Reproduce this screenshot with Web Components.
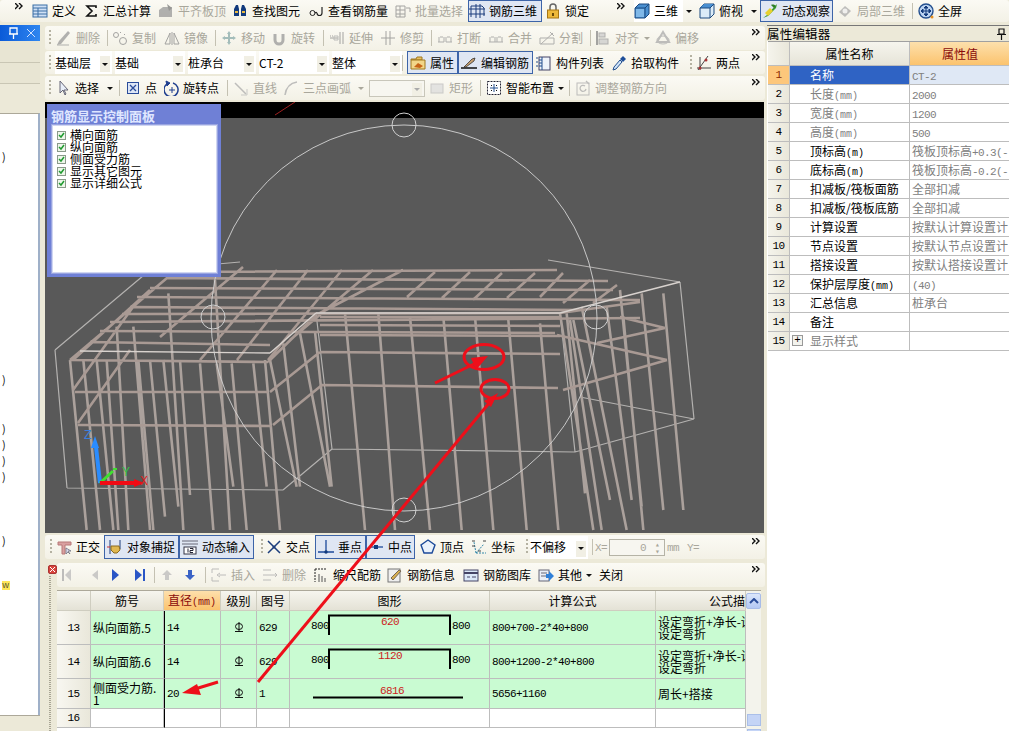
<!DOCTYPE html>
<html>
<head>
<meta charset="utf-8">
<style>
html,body{margin:0;height:100%;overflow:hidden;background:#ece9d8}
body{font:12px/14px "Noto Sans CJK SC",sans-serif;color:#000}
</style>
</head>
<body>
<app-shell>
  <tool-bar slot="top" h="22" pl="15">
    <tb-more w="17"></tb-more>
    <tool-btn w="51" icon="def">定义</tool-btn>
    <tool-btn w="75" icon="sum">汇总计算</tool-btn>
    <tool-btn w="74" icon="flush" dis>平齐板顶</tool-btn>
    <tool-btn w="76" icon="bino">查找图元</tool-btn>
    <tool-btn w="87" icon="glass">查看钢筋量</tool-btn>
    <tool-btn w="73" icon="batch" dis>批量选择</tool-btn>
    <tool-btn w="74" icon="grid3" pl="1" on>钢筋三维</tool-btn>
    <tool-btn w="72" icon="lock" ml="3">锁定</tool-btn>
    <tb-more w="17"></tb-more>
    <tool-btn w="65" icon="cube" drop="8" white>三维</tool-btn>
    <tool-btn w="61" icon="cubet" drop="8">俯视</tool-btn>
    <tool-btn w="73" icon="orbit" pl="2" on>动态观察</tool-btn>
    <tool-btn w="75" icon="local" ml="4" dis>局部三维</tool-btn>
    <tb-sep w="6"></tb-sep>
    <tool-btn w="60" icon="full">全屏</tool-btn>
  </tool-bar>

  <left-dock slot="left"></left-dock>

  <center-col slot="center">
    <tool-bar h="24" pl="4" mt="1">
      <tb-grip w="7"></tb-grip>
      <tool-btn w="51" icon="erase" dis>删除</tool-btn>
      <tb-sep w="5"></tb-sep>
      <tool-btn w="52" icon="copy" dis>复制</tool-btn>
      <tool-btn w="51" icon="mirror" dis>镜像</tool-btn>
      <tb-sep w="6"></tb-sep>
      <tool-btn w="50" icon="move" dis>移动</tool-btn>
      <tool-btn w="52" icon="rot" dis>旋转</tool-btn>
      <tb-sep w="6"></tb-sep>
      <tool-btn w="51" icon="extend" dis>延伸</tool-btn>
      <tool-btn w="51" icon="trim" dis>修剪</tool-btn>
      <tb-sep w="6"></tb-sep>
      <tool-btn w="51" icon="brk" dis>打断</tool-btn>
      <tool-btn w="51" icon="merge" dis>合并</tool-btn>
      <tool-btn w="51" icon="split" dis>分割</tool-btn>
      <tb-sep w="5"></tb-sep>
      <tool-btn w="60" icon="alignl" drop="5" dis>对齐</tool-btn>
      <tool-btn w="50" icon="offset" dis>偏移</tool-btn>
      <tb-more></tb-more>
    </tool-bar>
    <tool-bar h="23" pl="4" mt="1">
      <tb-grip w="6"></tb-grip>
      <tb-combo w="57">基础层</tb-combo>
      <tb-combo w="70" ml="3">基础</tb-combo>
      <tb-combo w="68" ml="3">桩承台</tb-combo>
      <tb-combo w="70" ml="3">CT-2</tb-combo>
      <tb-combo w="70" ml="3">整体</tb-combo>
      <tb-sep w="5"></tb-sep>
      <tool-btn w="51" icon="prop" pl="3" on>属性</tool-btn>
      <tool-btn w="75" icon="edit" pl="3" on>编辑钢筋</tool-btn>
      <tool-btn w="78" icon="list" pl="3">构件列表</tool-btn>
      <tool-btn w="72" icon="pick">拾取构件</tool-btn>
      <tb-grip w="13" ml="7"></tb-grip>
      <tool-btn w="50" icon="twop" ml="-7">两点</tool-btn>
      <tb-more></tb-more>
    </tool-bar>
    <tool-bar h="24" pl="4" mt="2">
      <tb-grip w="6"></tb-grip>
      <tool-btn w="64" icon="arrow" drop="8">选择</tool-btn>
      <tb-sep w="6"></tb-sep>
      <tool-btn w="39" icon="pt">点</tool-btn>
      <tool-btn w="63" icon="rotpt" gap="3">旋转点</tool-btn>
      <tb-sep w="6"></tb-sep>
      <tool-btn w="50" icon="line" dis>直线</tool-btn>
      <tool-btn w="86" icon="arc" drop="7" dis>三点画弧</tool-btn>
      <tb-combo w="56" off></tb-combo>
      <tool-btn w="51" icon="rect" ml="4" dis>矩形</tool-btn>
      <tb-sep w="6"></tb-sep>
      <tool-btn w="83" icon="smart" drop="4">智能布置</tool-btn>
      <tb-sep w="6"></tb-sep>
      <tool-btn w="100" icon="adj" dis>调整钢筋方向</tool-btn>
      <tb-more></tb-more>
    </tool-bar>

    <view-port>
      <ctrl-panel></ctrl-panel>
    </view-port>

    <tool-bar h="24" pl="5" mt="2">
      <tb-grip w="6"></tb-grip>
      <tool-btn w="48" icon="ortho">正交</tool-btn>
      <tool-btn w="75" icon="snap" pl="3" on>对象捕捉</tool-btn>
      <tool-btn w="75" icon="dyn" pl="3" on>动态输入</tool-btn>
      <tb-grip w="5" ml="7"></tb-grip>
      <tool-btn w="49" icon="cross">交点</tool-btn>
      <tool-btn w="51" icon="perp" pl="3" on>垂点</tool-btn>
      <tool-btn w="49" icon="mid" pl="2" on>中点</tool-btn>
      <tool-btn w="51" icon="vert" ml="5">顶点</tool-btn>
      <tool-btn w="55" icon="coord">坐标</tool-btn>
      <tb-grip w="4"></tb-grip>
      <tb-combo w="58">不偏移</tb-combo>
      <tb-sep w="3" ml="4"></tb-sep>
      <tb-spin></tb-spin>
      <tb-more></tb-more>
    </tool-bar>

    <rebar-panel>
      <tool-bar h="24" pl="2">
        <tool-btn w="28" icon="first" dis></tool-btn>
        <tool-btn w="20" icon="prev" dis></tool-btn>
        <tool-btn w="25" icon="next"></tool-btn>
        <tool-btn w="22" icon="last"></tool-btn>
        <tb-sep w="5"></tb-sep>
        <tool-btn w="23" icon="up" dis></tool-btn>
        <tool-btn w="23" icon="down"></tool-btn>
        <tb-sep w="6"></tb-sep>
        <tool-btn w="51" icon="ins" dis>插入</tool-btn>
        <tool-btn w="51" icon="del" dis>删除</tool-btn>
        <tool-btn w="74" icon="scale">缩尺配筋</tool-btn>
        <tool-btn w="76" icon="info">钢筋信息</tool-btn>
        <tool-btn w="75" icon="lib">钢筋图库</tool-btn>
        <tool-btn w="61" icon="other" drop="4">其他</tool-btn>
        <span>关闭</span>
        <tb-more></tb-more>
      </tool-bar>
      <rebar-grid></rebar-grid>
    </rebar-panel>
  </center-col>

  <prop-dock slot="right"></prop-dock>
</app-shell>
<red-notes></red-notes>

<script>
const S = 'fill="none" stroke="';
// icons are all drawn in a 16x16 box
const ICONS = {
  def: '<rect x="1" y="2" width="14" height="12" fill="#cfe0f5" stroke="#3a6ea5"/><path d="M1 5h14M6 5v9M1 8h14M1 11h14" stroke="#3a6ea5"/>',
  sum: `<path d="M13 5V3H4l5 5-5 5h9v-2" ${S}#111" stroke-width="1.6"/>`,
  flush: '<path d="M1 14V7l4-3h9v10z" fill="#999"/><path d="M9 1l5 4-3 3z" fill="#777"/>',
  bino: '<path d="M2 13V6l2-4h2l1 4v7zM9 13V6l1-4h2l2 4v7z" fill="#123a7c"/><path d="M3 9h3M10 9h3" stroke="#e8b840" stroke-width="2"/>',
  glass: `<circle cx="4.5" cy="10" r="2.5" ${S}#222"/><path d="M7 10c1-1 1-1 2 0M14 4v6a2.500 2.500 0 0 1-5 0" ${S}#222" stroke-width="1.200"/>`,
  batch: `<path d="M1 3h9v11H1zM1 7h9M1 11h9M5 3v11M11 5h4v4" ${S}#888"/>`,
  grid3: `<path d="M2 3h11l2 2v8M2 3v11M7 1v14M11 1v14M0 6h16M0 11h16" ${S}#1c3d7c"/>`,
  lock: `<path d="M5 7V4a3 3 0 0 1 6 0v3" ${S}#666" stroke-width="1.500"/><rect x="2.500" y="7" width="11" height="8" fill="#eeb93a" stroke="#a87612"/><rect x="7" y="10" width="2" height="3" fill="#6b4a08"/>`,
  cube: '<path d="M1 5l4-4h10v10l-4 4H1z" fill="#4a8fd0" stroke="#1c4a80"/><path d="M1 5h10v10M11 5l4-4" fill="none" stroke="#1c4a80"/><path d="M2 6h8v8H2z" fill="#80b8e8"/>',
  cubet: '<path d="M1 5l4-4h10v10l-4 4H1z" fill="#dcecf8" stroke="#1c4a80"/><path d="M1 5l4-4h10l-4 4z" fill="#4a8fd0"/><path d="M1 5h10v10M11 5l4-4" fill="none" stroke="#1c4a80"/>',
  orbit: '<path d="M1 15l4-3 8-9 2-2-1 4-8 8z" fill="#3a9a30"/><path d="M3 10l5-5 3 3-5 5z" fill="#e8d030"/><path d="M9 2c2-1 4 0 5 1l-2 2z" fill="#2f7f28"/>',
  local: '<path d="M2 9l6-6 6 5-6 6z" fill="#aaa"/><circle cx="8" cy="8" r="2.500" fill="#eee"/>',
  full: '<circle cx="8" cy="8" r="7" fill="#bcd4f2" stroke="#234f8e" stroke-width="1.400"/><path d="M8 3v10M3 8h10M8 3l-2 2h4zM8 13l-2-2h4zM3 8l2-2v4zM13 8l-2-2v4z" fill="#123a7c" stroke="#123a7c"/><circle cx="14" cy="14" r="1.500" fill="#e89020"/>',
  erase: '<path d="M1 15l4-1 9-11-2-2-9 10z" fill="#999"/><path d="M1 15h12" stroke="#999"/>',
  copy: `<circle cx="4" cy="5" r="2.500" ${S}#888"/><circle cx="11" cy="11" r="3.500" ${S}#888"/><path d="M8 2l1 1M12 4l1 1" stroke="#888"/>`,
  mirror: `<path d="M8 2v13M6 3L1 14h5zM10 3l5 11h-5z" ${S}#888"/>`,
  move: '<path d="M8 1l2 3H6zM8 15l-2-3h4zM1 8l3-2v4zM15 8l-3 2V6zM7 4h2v8H7zM4 7h8v2H4z" fill="#8aa"/>',
  rot: `<path d="M4 4v6a4 4 0 0 0 8 0V4" ${S}#999" stroke-width="3"/>`,
  extend: `<path d="M1 8h8M1 6h1M3 6h1M11 2v12M14 2v12" ${S}#888"/><path d="M5 6h4v4H5z" ${S}#aaa"/>`,
  trim: `<path d="M1 8h14M6 1v14M10 1v14" ${S}#888"/>`,
  brk: `<path d="M1 12h6M9 12h6M3 7h3M10 7h3M2 7v5M7 7v5M9 7v5M14 7v5" ${S}#999"/>`,
  merge: `<path d="M1 12h14M3 7h3M10 7h3M2 7v5M7 7v5M9 7v5M14 7v5" ${S}#999"/>`,
  split: `<path d="M1 14V8h14v6zM2 14L14 3M11 2l4 4" ${S}#999"/>`,
  alignl: `<path d="M2 1v14" ${S}#888" stroke-width="2"/><rect x="4" y="3" width="6" height="4" fill="#ccc" stroke="#999"/><rect x="4" y="9" width="9" height="5" fill="#ccc" stroke="#999"/>`,
  offset: `<path d="M8 2l6 10H2z" ${S}#aaa" stroke-width="2"/><ellipse cx="8" cy="10" rx="6" ry="4" ${S}#aaa"/>`,
  prop: '<path d="M1 4h5l1-2h5v3H1z" fill="#e8c060" stroke="#a07820"/><path d="M1 5h14v9H1z" fill="#f2d68a" stroke="#a07820"/><path d="M4 12l4-4 5 3-3 2z" fill="#c86418"/>',
  edit: '<path d="M0 13h16" stroke="#111" stroke-width="1.500"/><path d="M3 12l8-8 3-1-1 3-8 6z" fill="#c8a070" stroke="#222" stroke-width=".7"/>',
  list: `<rect x="3" y="2" width="11" height="13" fill="#eef3fa" stroke="#446"/><path d="M6 2v13M3 5h3M3 8h3M3 11h3M0 3h2M0 7h2M0 11h2" stroke="#234f8e"/>`,
  pick: '<path d="M2 15l1-3 6-7 2 2-6 7z" fill="#cfe4fa" stroke="#234f8e"/><path d="M9 4l3-3 3 3-3 3z" fill="#1f4f9a"/>',
  twop: `<path d="M1 13h14M4 2v13M12 1L2 15" ${S}#444"/><circle cx="4" cy="13" r="1.500" fill="#a33"/><circle cx="10" cy="5" r="1.500" fill="#a33"/>`,
  arrow: '<path d="M5 1v12l3-3 2 5 1-1-2-4h4z" fill="#e8eef8" stroke="#667"/>',
  pt: '<rect x="2.500" y="2.500" width="11" height="11" fill="#dde6f6" stroke="#2a4c9a"/><path d="M5 5l6 6M11 5l-6 6" stroke="#2a4c9a" stroke-width="1.300"/>',
  rotpt: `<path d="M3 4a7 7 0 1 0 6-1" ${S}#1f3f8f" stroke-width="1.500"/><path d="M2 1l4 2-3 3zM8 7v6M5 10h6" stroke="#1f3f8f" fill="#1f3f8f"/>`,
  line: '<path d="M2 3l11 11" stroke="#aaa" stroke-width="1.500"/><path d="M14 9v6H8" fill="none" stroke="#bbb"/>',
  arc: `<path d="M2 15C3 8 7 3 14 2" ${S}#aaa" stroke-width="1.500"/>`,
  rect: '<rect x="2" y="4" width="12" height="9" fill="#ddd" stroke="#bbb"/>',
  smart: '<rect x="1.500" y="1.500" width="13" height="13" fill="#fff" stroke="#223" stroke-dasharray="2 1"/><path d="M8 4v8M4 8h8" stroke="#234f8e"/><path d="M5 5h1v1H5zM10 5h1v1h-1zM5 10h1v1H5zM10 10h1v1h-1z" fill="#111"/>',
  adj: `<rect x="2" y="3" width="12" height="12" ${S}#aaa"/><path d="M11 1l3 3M10 6a3 3 0 1 0 1 3" ${S}#aaa" stroke-width="1.300"/>`,
  ortho: '<path d="M2 3h13v3H9v9H6V6H2z" fill="#d9a0a0" stroke="#b87878"/><path d="M10 9v6l2-2 2 2-2-3h3z" fill="#dde" stroke="#667" stroke-width=".7"/>',
  snap: '<path d="M3 1v14M13 1v9" stroke="#1c3d7c"/><path d="M4 7h8l1 4-3 3H7l-3-3z" fill="#e0b850" stroke="#8a6a20"/><path d="M0 8h3" stroke="#c33"/>',
  dyn: '<path d="M0 2h16M0 5h16" stroke="#667"/><rect x="2" y="8" width="12" height="7" fill="#fff" stroke="#334"/><path d="M6 9.500v4M8 9.500h3v2H8v2h3" fill="none" stroke="#223"/>',
  cross: '<path d="M2 2l12 12M14 2L2 14" stroke="#1c3d7c" stroke-width="1.500"/><circle cx="8" cy="8" r="1.500" fill="#1c3d7c"/>',
  perp: '<path d="M0 13h16M8 1v12" stroke="#1c4a9a" stroke-width="1.300"/><circle cx="8" cy="13" r="1.700" fill="#123a7c"/>',
  mid: '<path d="M1 8h14" stroke="#1c4a9a" stroke-width="1.300"/><rect x="6" y="6" width="4" height="4" fill="#123a7c"/>',
  vert: `<path d="M8 1l7 5-3 8H4L1 6z" fill="#eaf2fb" stroke="#1c4a9a" stroke-width="1.400"/>`,
  coord: '<path d="M5 14L3 3M5 14h10M5 14l8-9" fill="none" stroke="#38a" stroke-dasharray="2 1"/><path d="M1 2h3M12 2h3M1 7h3M7 12h3" stroke="#444"/>',
  first: '<path d="M4 2v12" stroke="#aaa" stroke-width="2"/><path d="M12 2v12L6 8z" fill="#bbb"/>',
  prev: '<path d="M11 3v10L5 8z" fill="#bbb"/>',
  next: '<path d="M5 2v12l7-6z" fill="#2a56c6"/>',
  last: '<path d="M3 2v12l7-6z" fill="#2a56c6"/><path d="M12 2v12" stroke="#2a56c6" stroke-width="2"/>',
  up: '<path d="M8 3l5 5h-3v5H6V8H3z" fill="#bbb"/>',
  down: '<path d="M6 3h4v5h3l-5 5-5-5h3z" fill="#3a63c6"/>',
  ins: `<path d="M1 2h7M1 14h7M1 2v4M1 10v4M8 8h7M9 6l-3 2 3 2" ${S}#aaa"/>`,
  del: `<path d="M1 3h8M1 8h8M1 13h8M9 8h6M13 6l2 2-2 2" ${S}#aaa"/>`,
  scale: '<path d="M2 2v13M2 2h11" stroke="#222" stroke-dasharray="2 1"/><path d="M6 7v8M9 9v6M12 11v4" stroke="#555"/>',
  info: '<rect x="1" y="2" width="12" height="13" fill="#eee" stroke="#777"/><path d="M4 11l8-8 2 1-8 9z" fill="#d8b050" stroke="#765"/>',
  lib: '<rect x="1" y="3" width="14" height="11" fill="#dbe8f8" stroke="#446"/><path d="M1 6h14" stroke="#446" stroke-width="2"/><path d="M4 10h3M9 10h4" stroke="#446"/>',
  other: '<rect x="1" y="3" width="10" height="11" fill="#e8eef8" stroke="#667"/><path d="M3 6h6M3 9h6" stroke="#667"/><path d="M8 7h3V4l5 5-5 5v-3H8z" fill="#2f7fd8"/>'
};

// small helper, every element is a shadow root with a render function
function el(tag, css, html) {
  customElements.define(tag, class extends HTMLElement {
    connectedCallback() {
      if (this.shadowRoot) return;
      this.attachShadow({ mode: 'open' }).innerHTML =
        '<style>' + (typeof css == 'function' ? css(this) : css) + '</style>' + (typeof html == 'function' ? html(this) : html);
    }
  });
}
const a = (e, n, d) => e.hasAttribute(n) ? e.getAttribute(n) : d;
// latin in the original is 6px wide per character
const m10 = 'font:11px/14px "Liberation Mono",monospace;letter-spacing:-.6px';
const svgNum = 'font-family="Liberation Mono" font-size="11" letter-spacing="-.6"';

el('app-shell', `
  :host{display:grid;grid-template-columns:45px 720px 244px;grid-template-rows:25px 706px;width:1009px;height:731px}
  .t{grid-column:1/4}
`, `<div class="t"><slot name="top"></slot></div><slot name="left"></slot><slot name="center"></slot><slot name="right"></slot>`);

el('center-col', ':host{display:flex;flex-direction:column;min-width:0;height:706px}', '<slot></slot>');

el('tool-bar', e => `
  :host{display:flex;align-items:center;height:${a(e,'h',24)}px;margin-top:${a(e,'mt',0)}px;padding-left:${a(e,'pl',0)}px;
    padding-right:5px;background:linear-gradient(#fbfaf4,#f3f1e6);border-radius:3px;flex:none;white-space:nowrap}
`, '<slot></slot>');

el('tool-btn', e => `
  :host{display:inline-flex;align-items:center;box-sizing:border-box;flex:none;height:100%;width:${a(e,'w',50)}px;
    padding-left:${a(e,'pl',0)}px;margin-left:${a(e,'ml',0)}px;
    ${e.hasAttribute('on') ? 'background:#dfe6f3;box-shadow:inset 0 0 0 1px #3d64a8;' : ''}
    ${e.hasAttribute('white') ? 'background:linear-gradient(90deg,#fff 76%,transparent 76%);' : ''}
    ${e.hasAttribute('dis') ? 'color:#a9a79c;' : ''}}
  svg{width:16px;height:16px;flex:none;margin-right:${a(e,'gap',4)}px;${e.hasAttribute('dis') ? 'opacity:.75;' : ''}}
  i{width:0;height:0;border:3px solid transparent;border-top:3px solid ${e.hasAttribute('dis') ? '#a9a79c' : '#111'};border-bottom:0;margin-left:${a(e,'drop',4)}px}
`, e => `<svg viewBox="0 0 16 16">${ICONS[a(e,'icon','')] || ''}</svg><slot></slot>${e.hasAttribute('drop') ? '<i></i>' : ''}`);

el('tb-grip', e => `
  :host{display:block;flex:none;height:16px;width:${a(e,'w',6)}px;margin-left:${a(e,'ml',0)}px}
  div{width:2px;height:16px;background:repeating-linear-gradient(#b5b2a2 0 2px,transparent 2px 4px)}
`, '<div></div>');

el('tb-sep', e => `
  :host{display:block;flex:none;width:${a(e,'w',6)}px;height:16px;margin-left:${a(e,'ml',0)}px}
  div{width:1px;height:16px;background:#c4c1b2}
`, '<div></div>');

el('tb-more', e => `
  :host{display:block;flex:none;align-self:flex-start;width:${a(e,'w',8)}px;${e.hasAttribute('w') ? '' : 'margin-left:auto;'}padding-top:3px}
  svg{display:block}
`, '<svg width="8" height="7" viewBox="0 0 8 7"><path d="M0 0l3 3-3 3M4 0l3 3-3 3" fill="none" stroke="#111" stroke-width="1.400"/></svg>');

el('tb-combo', e => `
  :host{display:flex;align-items:center;justify-content:space-between;box-sizing:border-box;flex:none;height:${e.hasAttribute('off') ? 17 : 23}px;
    width:${a(e,'w',60)}px;margin-left:${a(e,'ml',0)}px;background:${e.hasAttribute('off') ? '#f7f6f0' : '#fff'};
    ${e.hasAttribute('off') ? 'border:1px solid #c8c6ba;' : ''}padding-right:2px}
  b{display:flex;align-items:center;justify-content:center;width:10px;height:${e.hasAttribute('off') ? 13 : 16}px;background:#f1efe4;margin-top:3px}
  i{width:0;height:0;border:3px solid transparent;border-top:3px solid ${e.hasAttribute('off') ? '#aaa' : '#111'};border-bottom:0}
`, '<span><slot></slot></span><b><i></i></b>');

el('tb-spin', `
  :host{display:flex;align-items:center;flex:none;color:#a9a79c;${m10};margin-top:1px}
  span{display:flex;align-items:center;justify-content:space-between;box-sizing:border-box;width:56px;height:17px;margin:0 2px 0 0;
    border:1px solid #b5b3a6;background:#f7f6f0;padding:0 3px 0 30px}
  em{font-style:normal;font-size:8px;line-height:7px;width:8px;text-align:center}
  .x{width:14px} .m{width:20px}
`, '<div class="x">X=</div><span>0<em>▴<br>▾</em></span><div class="m">mm</div>Y=');

el('left-dock', `
  :host{display:flex;flex-direction:column;width:40px;height:706px;overflow:hidden;font:12px/14px "Noto Sans CJK SC",sans-serif}
  .ttl{display:flex;align-items:center;height:16px;flex:none;background:linear-gradient(90deg,#0a5ad8,#2f86f0);color:#fff}
  .ttl svg{display:block}
  .tab{height:21px;flex:none;border-bottom:1px solid #c9c6b4;background:#e8e5d3}
  .tree{flex:1;background:#fff;border-right:2px solid #9fb0c8;border-top:1px solid #aca899;box-sizing:border-box;margin-top:29px;width:40px;padding-left:2px;color:#111;position:relative}
  .tree div{height:16px;line-height:16px;font-size:11px}
  .w{background:#ffe65a;width:8px;height:9px!important;line-height:8px!important;color:#553;font-size:9px!important}
  .foot{height:15px;flex:none;background:#ece9d8;border-top:1px solid #aca899}
`, `<div class="ttl"><svg width="40" height="16" viewBox="0 0 40 16"><path d="M10 3h7v6h-7zM9 9h9M13.500 9v5" fill="none" stroke="#fff" stroke-width="1.300"/><path d="M27 4l8 8M35 4l-8 8" stroke="#cfe0ff"/></svg></div>
  <div class="tab"></div><div class="tab" style="height:20px"></div>
  <div class="tree">
    <div style="margin-top:34px">)</div>
    <div style="margin-top:207px">)</div>
    <div style="margin-top:33px">)</div><div>)</div><div>)</div><div>)</div>
    <div style="margin-top:48px">)</div>
    <div class="w" style="margin-top:33px">w</div>
  </div><div class="foot"></div>`);

el('view-port', `
  :host{display:block;position:relative;flex:none;width:719px;height:431px;margin-top:2px;background:#595959;overflow:hidden}
  svg{display:block}
`, () => {
  // wireframe in page coordinates
  const top = [[170,272,557,270],[166,278,608,281],[150,288,613,290],[137,297,640,300],[130,307,585,310],[122,314,560,313],
    [110,322,640,318],[100,331,555,333],[90,342,270,345],[70,360,268,362],[75,392,268,392],[78,425,272,426],[320,352,560,354],[322,385,558,388],
    [320,317,560,317],[320,325,560,326],[320,335,560,336],
    [167,278,70,360],[150,290,73,360],[133,307,73,390],[130,350,78,423],[243,267,160,337],[277,270,200,360],[308,270,237,360],[342,270,268,360],
    [373,270,290,340],[403,270,320,313],[435,272,407,297],[470,272,442,298],[502,273,473,300],[535,273,507,298],[563,273,540,297],[590,280,563,303],[617,285,593,303],
    [268,362,316,315],[270,392,320,352],[273,425,322,385],[557,335,667,360],[563,390,667,360],[597,343,665,328],[620,317,665,328],[560,313,640,302]];
  const z10 = [[60,300,110,810],[100,300,150,810],[140,300,190,810],[170,300,205,810],[200,200,235,810],[250,200,300,810],[265,300,310,810],[300,300,345,770],[340,300,385,740],[355,100,400,810],
    [390,300,420,705],[450,310,490,810],[495,60,540,810],[545,310,590,810],[500,310,550,680],[610,310,650,680],[645,300,690,810],[660,300,740,680],[700,250,750,680],[750,220,840,680],[795,215,845,680],[885,160,945,810],[985,160,1035,810]];
  const z11 = [[30,170,90,810],[130,170,185,810],[225,170,280,810],[325,180,380,810],[420,190,475,810],[480,160,580,810],[500,160,555,700],[510,180,605,810],[520,180,630,720],[545,140,680,810],[620,140,695,720],[660,90,725,740],[670,170,730,810],[725,100,790,750],[790,100,850,750]];
  const ln = (l, s, w) => `<path d="${l.map(p => `M${p[0]} ${p[1]}L${p[2]} ${p[3]}`).join('')}" fill="none" stroke="${s}" stroke-width="${w}"/>`;
  const verts = z10.map(p => [50+p[0]/3,260+p[1]/3,50+p[2]/3,260+p[3]/3]).concat(z11.map(p => [400+p[0]/3,260+p[1]/3,400+p[2]/3,260+p[3]/3]));
  const box = [[55,350,67,488],[67,488,283,490],[283,490,332,449],[332,449,575,452],[575,452,694,419],[694,419,680,282],[694,419,580,397],[316,313,332,449],[560,313,575,452],[55,350,150,270],[680,282,548,260],[150,270,240,262],[283,490,332,449]];
  const hi = [[80,351,270,353],[270,353,316,313],[316,313,560,313],[560,313,680,282]];
  const small = [[404,125],[404,510],[213,317],[596,317]].map(c => `<circle cx="${c[0]}" cy="${c[1]}" r="12" fill="none" stroke="#d0d0d0"/>`).join('');
  return `<svg width="719" height="431" viewBox="45 102 719 431">
    <rect x="45" y="102" width="719" height="16" fill="#000"/>
    ${ln(box,'#b4b2b0',1.200)}
    ${ln(verts,'#aba19c',2.600)}
    ${ln(top,'#a99a94',2.600)}
    ${ln(hi,'#d8d2ce',1.400)}
    <circle cx="404" cy="318" r="193" fill="none" stroke="#d4d4d4" stroke-width=".9"/>${small}
    <path d="M275 115l20-13" stroke="#a02020"/>
    <path d="M100 483L96 447" stroke="#2a8cff" stroke-width="4"/><path d="M95 436l-4 12h8z" fill="#2a8cff"/>
    <path d="M100 483l13-12" stroke="#40e030" stroke-width="3"/><path d="M113 469h4" stroke="#40e030" stroke-width="2"/>
    <path d="M100 483h38" stroke="#f00a14" stroke-width="4"/><path d="M144 483l-10-4v8z" fill="#f00a14"/>
    <text x="84" y="439" font-family="Liberation Sans" font-size="12" fill="#3a7fe0">Z</text>
    <text x="122" y="476" font-family="Liberation Sans" font-size="12" fill="#30c040">Y</text>
    <text x="140" y="485" font-family="Liberation Sans" font-size="12" fill="#e02020">X</text>
  </svg><slot></slot>`;
});

el('ctrl-panel', `
  :host{position:absolute;left:2px;top:2px;box-sizing:border-box;width:174px;height:173px;background:#6f80d6;padding:0 4px 4px 5px;
    display:flex;flex-direction:column;font:12px/12px "Noto Sans CJK SC",sans-serif;color:#000}
  h4{margin:0;height:21px;flex:none;font:bold 13px/24px "Noto Sans CJK SC",sans-serif;color:#dfe6ff;margin-left:-1px;white-space:nowrap}
  .b{flex:1;background:#fff;border:1px solid #d0d6f2;outline:1px solid #99a4e0;padding:3px 0 0 4px}
  label{display:flex;height:12px;align-items:center}
  i{display:block;width:9px;height:9px;border:1px solid #8a9a8a;background:#eef6ea;margin-right:4px;box-sizing:border-box;position:relative}
  svg{position:absolute;left:0;top:0}
`, '<h4>钢筋显示控制面板</h4><div class="b">' + ['横向面筋','纵向面筋','侧面受力筋','显示其它图元','显示详细公式'].map(t =>
  `<label><i><svg width="7" height="7" viewBox="0 0 7 7"><path d="M1 3l2 2 3-4" fill="none" stroke="#1f9a2f" stroke-width="1.500"/></svg></i>${t}</label>`).join('') + '</div>');

el('rebar-panel', `
  :host{display:grid;grid-template-columns:12px 1fr;flex:1;min-height:0;margin-top:4px}
  .g{display:flex;flex-direction:column;align-items:center}
  .x{width:9px;height:9px;margin:2px 0 2px 2px;background:#d8443c;border:1px solid #a33;border-radius:2px;box-sizing:border-box;position:relative}
  .x svg{position:absolute;left:0;top:0}
  .d{width:2px;flex:1;margin-left:-3px;background:repeating-linear-gradient(#a8a594 0 1px,transparent 1px 2px)}
  .m{display:flex;flex-direction:column;min-width:0}
`, `<div class="g"><div class="x"><svg width="7" height="7" viewBox="0 0 7 7"><path d="M1 1l5 5M6 1l-5 5" stroke="#fff"/></svg></div><div class="d"></div></div><div class="m"><slot></slot></div>`);

el('rebar-grid', `
  :host{display:block;position:relative;flex:1;margin-top:3px;background:#fff;border-top:1px solid #aca899;overflow:hidden;width:704px;font:12px/12px "Noto Sans CJK SC",sans-serif}
  table{border-collapse:separate;border-spacing:0;table-layout:fixed;width:689px}
  th,td{padding:0;border-right:1px solid #bdbdbd;border-bottom:1px solid #bdbdbd;box-sizing:border-box;overflow:hidden;white-space:nowrap}
  th{height:20px;font-weight:400;text-align:center;background:linear-gradient(#f6f5ee,#e4e2d6);border-color:#cfcdc0}
  th.o{background:linear-gradient(#fde0ac,#fbc36e);color:#8a0a0a;white-space:nowrap}
  td{background:#c9fbd2;padding-left:2px}
  td.n{background:linear-gradient(90deg,#f8f7f1,#e9e7da);text-align:center;padding:0;${m10}}
  td.m{${m10}}
  td.l{text-align:center;padding:0}
  td.s{padding:0}
  td.c{border-left:1px solid #000;padding-left:2px}
  tr.e td:not(.n){background:#fff}
  small{font:10px "Liberation Mono",monospace}
  .b{position:absolute;left:689px;top:2px;width:15px;height:16px;background:linear-gradient(#dbe6fb,#b4c8f4);border:1px solid #a8bce8;box-sizing:border-box;border-radius:2px}
  .b svg{display:block;margin:4px 2px}
  .tr{position:absolute;left:689px;top:0;bottom:0;width:15px;background:#f3f3ec}
  .th{position:absolute;left:690px;top:123px;width:14px;height:12px;background:#c4d4f6;border:1px solid #aabfe9;box-sizing:border-box}
  .th2{top:138px}
  svg.sh{display:block}
`, () => {
  const sh = (t, x) => `<svg class="sh" width="199" height="33" viewBox="0 0 199 33"><path d="M39 24V4.500H160V24" fill="none" stroke="#000" stroke-width="2"/><text x="${x}" y="14" ${svgNum} fill="#c22">${t}</text><text x="21" y="18" ${svgNum}>800</text><text x="162" y="18" ${svgNum}>800</text></svg>`;
  const sym = '<svg width="12" height="12" viewBox="0 0 12 12"><path d="M6 1v10M2 10.500h8" stroke="#111"/><ellipse cx="6" cy="5.500" rx="3.500" ry="3" fill="none" stroke="#111"/></svg>';
  const desc = '设定弯折+净长-设<br>设定弯折';
  return `<div class="tr"></div><table>
    <colgroup><col style="width:34px"><col style="width:73px"><col style="width:57px"><col style="width:36px"><col style="width:33px"><col style="width:200px"><col style="width:166px"><col style="width:90px"></colgroup>
    <tr><th></th><th>筋号</th><th class="o">直径<small>(mm)</small></th><th>级别</th><th>图号</th><th>图形</th><th>计算公式</th><th style="text-align:left;padding-left:53px">公式描述</th></tr>
    <tr style="height:34px"><td class="n">13</td><td>纵向面筋<span style="${m10}">.5</span></td><td class="m c">14</td><td class="l">${sym}</td><td class="m">629</td><td class="s">${sh('620', 91)}</td><td class="m">800+700-2*40+800</td><td>${desc}</td></tr>
    <tr style="height:34px"><td class="n">14</td><td>纵向面筋<span style="${m10}">.6</span></td><td class="m c">14</td><td class="l">${sym}</td><td class="m">629</td><td class="s">${sh('1120', 88)}</td><td class="m">800+1200-2*40+800</td><td>${desc}</td></tr>
    <tr style="height:30px"><td class="n">15</td><td>侧面受力筋<span style="${m10}">.</span><br><span style="${m10}">1</span></td><td class="m c">20</td><td class="l">${sym}</td><td class="m">1</td><td class="s"><svg class="sh" width="199" height="29" viewBox="0 0 199 29"><path d="M23 18.500h150" stroke="#000" stroke-width="2"/><text x="90" y="15" ${svgNum} fill="#c22">6816</text></svg></td><td class="m">5656+1160</td><td>周长+搭接</td></tr>
    <tr class="e" style="height:19px"><td class="n">16</td><td></td><td class="c"></td><td></td><td></td><td></td><td></td><td></td></tr>
  </table>
  <div class="b"><svg width="10" height="6" viewBox="0 0 10 6"><path d="M1 5l4-4 4 4" fill="none" stroke="#2a4c9a" stroke-width="2"/></svg></div>
  <div class="th"></div><div class="th th2"></div>`;
});

el('prop-dock', `
  :host{display:flex;flex-direction:column;height:706px;margin-left:2px;width:242px;background:#fff;overflow:hidden;font:12px/18px "Noto Sans CJK SC",sans-serif}
  .ttl{display:flex;justify-content:space-between;align-items:center;height:16px;flex:none;background:#ece9d8;border-top:1px solid #777;box-sizing:border-box;font-size:12.500px;padding-right:3px;letter-spacing:.2px}
  table{border-collapse:separate;border-spacing:0;table-layout:fixed;width:242px;margin-left:1px;border-top:1px solid #a0a0a0}
  th,td{padding:0;border-right:1px solid #bdbdbd;border-bottom:1px solid #bdbdbd;box-sizing:border-box;overflow:hidden;white-space:nowrap;height:19px}
  th{height:24px;font-weight:400;background:linear-gradient(#f6f5ee,#e6e4d8)}
  th.o{background:linear-gradient(#fde0ac,#fbc36e);color:#8a0a0a;border-right:0}
  td:first-child,th:first-child{text-align:center;background:linear-gradient(90deg,#f5f4ec,#e9e7da);${m10}}
  td.sel0{background:#fdc77b!important;color:#8a2a00}
  td.nm{padding-left:20px;position:relative}
  td.g{color:#808080}
  td.sel{background:#2f63c4;color:#fff}
  td.v{color:#808080;padding-left:2px;border-right:0}
  td.v span{${m10}}
  small{font:10px "Liberation Mono",monospace}
  td.v.cur{background:#dfe8f5}
  i{position:absolute;left:2px;top:3px;width:11px;height:11px;border:1px solid #999;box-sizing:border-box;font:normal 11px/9px "Liberation Mono";text-align:center;background:#f3f3ee;color:#000}
`, () => {
  const mm = '<small>(mm)</small>', mn = s => `<span>${s}</span>`;
  const rows = [
    ['名称', mn('CT-2'), 'sel'], ['长度'+mm, mn('2000'), 'g'], ['宽度'+mm, mn('1200'), 'g'], ['高度'+mm, mn('500'), 'g'],
    ['顶标高<small>(m)</small>', '筏板顶标高'+mn('+0.3(-')], ['底标高<small>(m)</small>', '筏板顶标高'+mn('-0.2(-')],
    ['扣减板/筏板面筋', '全部扣减'], ['扣减板/筏板底筋', '全部扣减'], ['计算设置', '按默认计算设置计'], ['节点设置', '按默认节点设置计'],
    ['搭接设置', '按默认搭接设置计'], ['保护层厚度'+mm, mn(' (40)')], ['汇总信息', '桩承台'], ['备注', ''], ['<i>+</i>显示样式', '', 'g']
  ];
  return `<div class="ttl"><span>属性编辑器</span><svg width="9" height="12" viewBox="0 0 9 12"><path d="M2 1h5v5H2zM0 6.500h9M4.500 6.500V12" fill="none" stroke="#111" stroke-width="1.200"/></svg></div>
  <table><colgroup><col style="width:22px"><col style="width:120px"><col></colgroup>
  <tr><th></th><th>属性名称</th><th class="o">属性值</th></tr>` +
  rows.map((r, i) => `<tr><td class="${r[2]=='sel'?'sel0':''}">${i+1}</td><td class="nm ${r[2]||''}">${r[0]}</td><td class="v ${r[2]=='sel'?'cur':''}">${r[1]}</td></tr>`).join('') + '</table>';
});

el('red-notes', ':host{position:absolute;left:0;top:0;width:1009px;height:731px;pointer-events:none}svg{display:block}', `
  <svg width="1009" height="731" viewBox="0 0 1009 731">
    <g fill="none" stroke="#ee0f1a">
      <ellipse cx="484" cy="357" rx="20" ry="12.500" stroke-width="3"/>
      <ellipse cx="495" cy="389" rx="14" ry="9.500" stroke-width="3"/>
      <path d="M258 682L490 402" stroke-width="3"/>
      <path d="M435 383L478 362" stroke-width="3"/>
      <path d="M218 682L195 689" stroke-width="3"/>
    </g>
    <g fill="#ee0f1a">
      <path d="M498 393L484 401 491 407z"/>
      <path d="M488 356L471 358 476 370z"/>
      <path d="M182 693L197 684 201 695z"/>
    </g>
  </svg>`);
</script>
</body>
</html>
